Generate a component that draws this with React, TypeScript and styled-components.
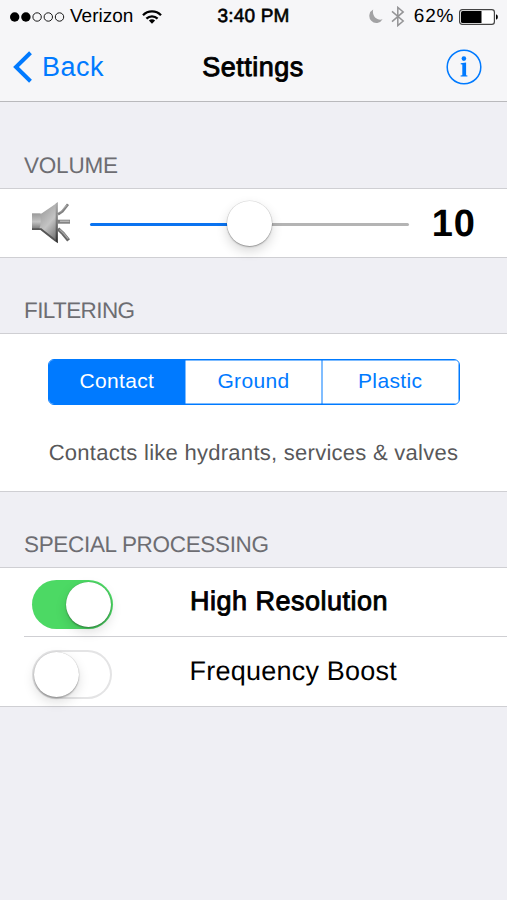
import React, { useState } from "react";
import styled, { createGlobalStyle } from "styled-components";

const BLUE = "#007aff";

const GlobalStyle = createGlobalStyle`
  * { box-sizing: border-box; }
  body {
    margin: 0;
    background: #efeff4;
    font-family: "Liberation Sans", Arial, sans-serif;
    color: #000;
    text-rendering: geometricPrecision;
  }
  button {
    font: inherit;
    color: inherit;
    background: none;
    border: 0;
    padding: 0;
    margin: 0;
  }
`;

const Screen = styled.div`
  width: 507px;
  height: 900px;
  overflow: hidden;
  background: #efeff4;
`;

const Header = styled.header`
  height: 102px;
  background: #f6f6f8;
  border-bottom: 1px solid #b9b9bc;
`;

const StatusBar = styled.div`
  display: grid;
  grid-template-columns: 1fr 76px 1fr;
  height: 32px;
  padding: 0 9px 0 10px;
  font-size: 19px;
  line-height: 33px;
`;

const StatusGroup = styled.div<{ $end?: boolean }>`
  display: flex;
  align-items: center;
  justify-content: ${(p) => (p.$end ? "flex-end" : "flex-start")};
  white-space: nowrap;
`;

const Carrier = styled.span`
  margin: 0 9px 0 5px;
`;

const Clock = styled.span`
  margin-left: -1px;
  text-align: center;
  white-space: nowrap;
  letter-spacing: 0.2px;
  -webkit-text-stroke: 0.6px #000;
`;

const Percent = styled.span`
  margin: 0 5px 0 9px;
  letter-spacing: 0.7px;
`;

const NavBar = styled.nav`
  display: grid;
  grid-template-columns: 1fr 110px 1fr;
  align-items: center;
  height: 69px;
  padding: 0 25px 0 12px;
  font-size: 27px;
  line-height: 69px;
`;

const BackButton = styled.button`
  display: flex;
  align-items: center;
  gap: 9px;
  color: ${BLUE};
`;

const BackLabel = styled.span`
  padding-top: 2px;
  line-height: 67px;
  letter-spacing: 0.5px;
`;

const Title = styled.h1`
  margin: 0 -6px 0 6px;
  padding-top: 2px;
  line-height: 67px;
  font-size: 27px;
  font-weight: 400;
  text-align: center;
  letter-spacing: 0.5px;
  -webkit-text-stroke: 0.9px #000;
`;

const InfoButton = styled.button`
  display: flex;
  justify-self: end;
`;

const SectionTitle = styled.h2<{ $height: number; $spacing: number }>`
  display: flex;
  align-items: flex-end;
  height: ${(p) => p.$height}px;
  margin: 0;
  padding: 0 24px 9px;
  font-size: 22.5px;
  font-weight: 400;
  line-height: 26px;
  letter-spacing: ${(p) => p.$spacing}px;
  color: #6d6d72;
`;

const Panel = styled.section<{ $height: number }>`
  height: ${(p) => p.$height}px;
  background: #fff;
  border-top: 1px solid #cfcfd3;
  border-bottom: 1px solid #cfcfd3;
`;

const VolumeRow = styled.div`
  display: flex;
  align-items: center;
  height: 68px;
  padding: 0 31px 0 30px;
`;

const Slider = styled.div`
  display: flex;
  align-items: center;
  width: 319px;
  height: 46px;
  margin-left: 18px;
`;

const Track = styled.div<{ $filled?: boolean }>`
  flex: ${(p) => (p.$filled ? "0 0 138px" : "1")};
  height: 3px;
  margin-top: 3px;
  border-radius: 2px;
  background: ${(p) => (p.$filled ? "#0a73f0" : "#b4b4b4")};
`;

const Thumb = styled.div`
  flex: none;
  width: 45px;
  height: 45px;
  margin: 0 -1px;
  border-radius: 50%;
  background: #fff;
  z-index: 1;
  box-shadow: 0 0 0 0.5px rgba(0, 0, 0, 0.12), 0 1px 1.5px rgba(0, 0, 0, 0.3),
    0 5px 12px rgba(0, 0, 0, 0.16);
`;

const VolumeValue = styled.span`
  flex: 1;
  margin-top: 2px;
  font-size: 38px;
  font-weight: 700;
  line-height: 42px;
  text-align: right;
  letter-spacing: 1px;
`;

const FilterContent = styled.div`
  display: flex;
  flex-direction: column;
  align-items: center;
  padding-top: 25px;
`;

const Segments = styled.div`
  display: flex;
  width: 412px;
  height: 46px;
  overflow: hidden;
  border: 1px solid ${BLUE};
  border-radius: 6px;
`;

const Segment = styled.button<{ $active: boolean }>`
  flex: 1;
  padding-bottom: 2px;
  font-size: 21px;
  letter-spacing: 0.35px;
  color: ${(p) => (p.$active ? "#fff" : BLUE)};
  background: ${(p) => (p.$active ? BLUE : "#fff")};
  box-shadow: inset 0 0 0 0.5px ${BLUE};
  &:first-child { border-radius: 4px 0 0 4px; }
  &:last-child { border-radius: 0 4px 4px 0; }
`;

const Description = styled.p`
  margin: 35px 0 0;
  font-size: 22px;
  line-height: 26px;
  letter-spacing: 0.27px;
  white-space: nowrap;
  color: #58585a;
`;

const OptionRow = styled.div<{ $divided?: boolean }>`
  display: grid;
  grid-template-columns: 164px 1fr;
  align-items: center;
  height: ${(p) => (p.$divided ? 70 : 68)}px;
  margin-left: 24px;
  padding-left: 8px;
  border-top: ${(p) => (p.$divided ? "1px solid #cfcfd3" : "0")};
  & > button { margin-top: ${(p) => (p.$divided ? 6 : 5)}px; }
`;

const OptionLabel = styled.span<{ $strong?: boolean }>`
  margin: -2px 0 0 -8px;
  padding-left: ${(p) => (p.$strong ? 2 : 1.5)}px;
  font-size: 27px;
  line-height: 32px;
  letter-spacing: ${(p) => (p.$strong ? 0.5 : 0.23)}px;
  -webkit-text-stroke: ${(p) => (p.$strong ? 0.9 : 0)}px #000;
`;

const SwitchTrack = styled.button<{ $on: boolean }>`
  display: flex;
  align-items: center;
  justify-content: ${(p) => (p.$on ? "flex-end" : "flex-start")};
  width: ${(p) => (p.$on ? 81 : 80)}px;
  height: 49px;
  padding: 0 2px 0 1.5px;
  border-radius: 25px;
  background: ${(p) => (p.$on ? "#4cd964" : "#fff")};
  box-shadow: ${(p) => (p.$on ? "none" : "inset 0 0 0 2px #e4e4e5")};
`;

const SwitchKnob = styled.span`
  width: 45px;
  height: 45px;
  border-radius: 50%;
  background: #fff;
  box-shadow: 0 0 1px rgba(0, 0, 0, 0.3), 0 1.5px 1.5px rgba(0, 0, 0, 0.25),
    0 5px 12px rgba(0, 0, 0, 0.13);
`;

const MoonSlot = styled.span`
  display: flex;
  margin-right: 8px;
`;

function SignalDots() {
  return (
    <svg width="55" height="12" viewBox="0 0 55 12">
      {[4.7, 15.9, 27.1, 38.3, 49.5].map((cx, i) => (
        <circle key={cx} cx={cx} cy="6" r={i < 2 ? 4.7 : 4.2} fill={i < 2 ? "#000" : "none"} stroke="#000" strokeWidth={i < 2 ? 0 : 0.9} />
      ))}
    </svg>
  );
}

function WifiIcon() {
  return (
    <svg width="20" height="14" viewBox="0 0 20 14" fill="none" stroke="#000" strokeWidth="2.3">
      <path d="M1 5.2C6 .1 14 .1 19 5.2" />
      <path d="M4.4 8.6C7.6 5.5 12.4 5.5 15.6 8.6" />
      <path d="M10 13.8 6.9 10.6Q10 8.1 13.1 10.6Z" fill="#000" stroke="none" />
    </svg>
  );
}

function MoonIcon() {
  return (
    <svg width="15" height="15" viewBox="0 0 15 15">
      <path d="M5.2.5A7.1 7.1 0 1 0 14.6 10.3C9 12.2 3.6 6.8 5.2.5Z" fill="#a2a2a4" />
    </svg>
  );
}

function BluetoothIcon() {
  return (
    <svg width="14" height="21" viewBox="0 0 14 21" fill="none" stroke="#949496" strokeWidth="1.5">
      <path d="M1 5.4 12.2 15 6.8 19.6V1.4L12.2 5.9 1 15.6" />
    </svg>
  );
}

function BatteryIcon() {
  return (
    <svg width="39" height="16" viewBox="0 0 39 16">
      <rect x=".6" y=".6" width="34.8" height="14.8" rx="2.6" fill="#fff" stroke="#444" strokeWidth="1.2" />
      <path d="M3.6 2H22.5V14H3.6Q2 14 2 12.4V3.6Q2 2 3.6 2Z" fill="#000" />
      <path d="M37 5.2Q38.9 5.8 38.9 8T37 10.8Z" fill="#000" />
    </svg>
  );
}

function InfoIcon() {
  return (
    <svg width="36" height="36" viewBox="0 0 36 36" fill={BLUE}>
      <circle cx="18" cy="18" r="16.8" fill="none" stroke={BLUE} strokeWidth="1.5" />
      <circle cx="17.9" cy="9.6" r="2.3" />
      <path d="M14.7 14.3 20.1 13.6V26.2L21.4 26.6V27.6H14.6V26.6L16.3 26.2V15.6L14.7 15.3Z" />
    </svg>
  );
}

function SpeakerIcon() {
  return (
    <svg width="42" height="44" viewBox="0 0 42 44">
      <defs>
        <linearGradient id="cone" x1="0" y1="0" x2=".75" y2="1">
          <stop offset="0" stopColor="#8a8a8a" />
          <stop offset=".35" stopColor="#a6a6a6" />
          <stop offset=".65" stopColor="#c4c4c4" />
          <stop offset="1" stopColor="#777" />
        </linearGradient>
        <linearGradient id="box" x1="0" y1="0" x2="0" y2="1">
          <stop offset="0" stopColor="#999" />
          <stop offset=".5" stopColor="#ccc" />
          <stop offset="1" stopColor="#555" />
        </linearGradient>
        <linearGradient id="rim" x1="0" y1="0" x2="0" y2="1">
          <stop offset="0" stopColor="#b0b0b0" />
          <stop offset=".5" stopColor="#777" />
          <stop offset="1" stopColor="#292929" />
        </linearGradient>
      </defs>
      <path d="M2 12.5H11.5L27.6 1.5V42L11 29H2Z" fill="url(#cone)" />
      <path d="M2 12.5H10Q12 21 9 29H2Z" fill="url(#box)" opacity=".75" />
      <path d="M2 28.2H11L26 40" fill="none" stroke="#555" strokeWidth="1.8" />
      <path d="M25.7 2.5 27.8 1V42.2L25.7 40.6Z" fill="url(#rim)" />
      <g fill="none">
        <path d="M28 13.3 32.5 10.4 38 3.2" stroke="#808080" strokeWidth="2.6" />
        <path d="M30 11.4 37 4.2" stroke="#b5b5b5" strokeWidth="1" />
        <path d="M27 20.7H40" stroke="#808080" strokeWidth="4" />
        <path d="M30 20.3H39.5" stroke="#b5b5b5" strokeWidth="1.6" />
        <path d="M28 27.8 33 32.5 38.6 39.4" stroke="#666" strokeWidth="3.6" />
        <path d="M29.5 28.4 34 32.8 38.3 37.8" stroke="#a5a5a5" strokeWidth="1.4" />
      </g>
    </svg>
  );
}

function Switch({ on, label, onToggle }: { on: boolean; label: string; onToggle: () => void }) {
  return (
    <SwitchTrack $on={on} role="switch" aria-checked={on} aria-label={label} onClick={onToggle}>
      <SwitchKnob />
    </SwitchTrack>
  );
}

const FILTERS = ["Contact", "Ground", "Plastic"];

export default function App() {
  const [filter, setFilter] = useState("Contact");
  const [highResolution, setHighResolution] = useState(true);
  const [boost, setBoost] = useState(false);

  return (
    <>
      <GlobalStyle />
      <Screen>
        <Header>
          <StatusBar>
            <StatusGroup>
              <SignalDots />
              <Carrier>Verizon</Carrier>
              <WifiIcon />
            </StatusGroup>
            <Clock>3:40 PM</Clock>
            <StatusGroup $end>
              <MoonSlot>
                <MoonIcon />
              </MoonSlot>
              <BluetoothIcon />
              <Percent>62%</Percent>
              <BatteryIcon />
            </StatusGroup>
          </StatusBar>
          <NavBar>
            <BackButton>
              <svg width="21" height="32" viewBox="0 0 21 32" fill="none" stroke={BLUE} strokeWidth="4">
                <path d="M18.5 1.8 4 16 18.5 30.2" />
              </svg>
              <BackLabel>Back</BackLabel>
            </BackButton>
            <Title>Settings</Title>
            <InfoButton aria-label="Info">
              <InfoIcon />
            </InfoButton>
          </NavBar>
        </Header>

        <SectionTitle $height={86} $spacing={-0.2}>VOLUME</SectionTitle>
        <Panel $height={70}>
          <VolumeRow>
            <SpeakerIcon />
            <Slider>
              <Track $filled />
              <Thumb />
              <Track />
            </Slider>
            <VolumeValue>10</VolumeValue>
          </VolumeRow>
        </Panel>

        <SectionTitle $height={75} $spacing={-0.6}>FILTERING</SectionTitle>
        <Panel $height={159}>
          <FilterContent>
            <Segments>
              {FILTERS.map((name) => (
                <Segment key={name} $active={name === filter} onClick={() => setFilter(name)}>
                  {name}
                </Segment>
              ))}
            </Segments>
            <Description>Contacts like hydrants, services &amp; valves</Description>
          </FilterContent>
        </Panel>

        <SectionTitle $height={75} $spacing={-0.32}>SPECIAL PROCESSING</SectionTitle>
        <Panel $height={140}>
          <OptionRow>
            <Switch on={highResolution} label="High Resolution" onToggle={() => setHighResolution(!highResolution)} />
            <OptionLabel $strong>High Resolution</OptionLabel>
          </OptionRow>
          <OptionRow $divided>
            <Switch on={boost} label="Frequency Boost" onToggle={() => setBoost(!boost)} />
            <OptionLabel>Frequency Boost</OptionLabel>
          </OptionRow>
        </Panel>
      </Screen>
    </>
  );
}
